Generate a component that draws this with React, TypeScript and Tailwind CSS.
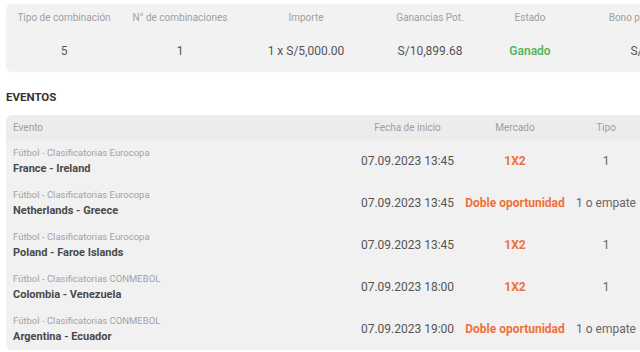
import React from 'react';

const summaryCols = [
  { label: 'Tipo de combinación', value: '5', w: 'w-[116px]' },
  { label: 'N° de combinaciones', value: '1', w: 'w-[116px]' },
  { label: 'Importe', value: '1 x S/5,000.00', w: 'w-[136px]' },
  { label: 'Ganancias Pot.', value: 'S/10,899.68', w: 'w-[112px]' },
  { label: 'Estado', value: 'Ganado', w: 'w-[88px]' },
  { label: 'Bono por combinada', value: 'S/500.00', w: 'w-[162px]' },
];

const events = [
  { league: 'Fútbol - Clasificatorias Eurocopa', match: 'France - Ireland', date: '07.09.2023 13:45', market: '1X2', pick: '1' },
  { league: 'Fútbol - Clasificatorias Eurocopa', match: 'Netherlands - Greece', date: '07.09.2023 13:45', market: 'Doble oportunidad', pick: '1 o empate' },
  { league: 'Fútbol - Clasificatorias Eurocopa', match: 'Poland - Faroe Islands', date: '07.09.2023 13:45', market: '1X2', pick: '1' },
  { league: 'Fútbol - Clasificatorias CONMEBOL', match: 'Colombia - Venezuela', date: '07.09.2023 18:00', market: '1X2', pick: '1' },
  { league: 'Fútbol - Clasificatorias CONMEBOL', match: 'Argentina - Ecuador', date: '07.09.2023 19:00', market: 'Doble oportunidad', pick: '1 o empate' },
];

export default function App() {
  return (
    <div
      className="w-[640px] h-[352px] overflow-hidden bg-white"
      style={{ fontFamily: 'Roboto, "Liberation Sans", sans-serif' }}
    >
      <div className="w-[760px] pl-[6px] pt-[4px]">
        {/* Summary */}
        <div className="flex h-[67px] flex-col rounded-[6px] bg-[#f2f2f2] shadow-[0_1px_2px_rgba(0,0,0,0.06)]">
          <div className="flex h-[27px] items-center">
            {summaryCols.map((c) => (
              <div key={c.label} className={`${c.w} shrink-0 whitespace-nowrap text-center text-[10px] text-[#9f9f9f]`}>
                {c.label}
              </div>
            ))}
          </div>
          <div className="flex h-[39px] items-center">
            {summaryCols.map((c) => (
              <div
                key={c.label}
                className={`${c.w} shrink-0 whitespace-nowrap text-center text-[12px] ${
                  c.value === 'Ganado' ? 'font-semibold text-[#55b558]' : 'text-[#555]'
                }`}
              >
                {c.value}
              </div>
            ))}
          </div>
        </div>

        {/* Eventos */}
        <div className="mt-[18px] h-[16px] text-[11.5px] font-bold leading-[16px] text-[#333]">EVENTOS</div>

        <div className="mt-[10px] w-[700px] overflow-hidden rounded-[6px] bg-[#f1f1f1]">
          <div className="flex h-[25px] items-center bg-[#ececec] text-[10px] text-[#9f9f9f]">
            <div className="w-[349px] shrink-0 pl-[7px]">Evento</div>
            <div className="w-[105px] shrink-0 text-center">Fecha de inicio</div>
            <div className="w-[110px] shrink-0 text-center">Mercado</div>
            <div className="w-[72px] shrink-0 text-center">Tipo</div>
          </div>
          {events.map((e) => (
            <div key={e.match} className="flex h-[42px] items-center">
              <div className="flex w-[349px] shrink-0 flex-col pl-[7px]">
                <span className="text-[9.5px] leading-[13px] text-[#a3a3a3]">{e.league}</span>
                <span className="mt-[2px] text-[11px] font-bold leading-[15px] text-[#4a4a4a]">{e.match}</span>
              </div>
              <div className="w-[105px] shrink-0 whitespace-nowrap text-center text-[12px] text-[#555]">{e.date}</div>
              <div className="w-[110px] shrink-0 whitespace-nowrap text-center text-[12px] font-bold text-[#f0703a]">
                {e.market}
              </div>
              <div className="w-[72px] shrink-0 whitespace-nowrap text-center text-[12px] text-[#666]">{e.pick}</div>
            </div>
          ))}
        </div>
      </div>
    </div>
  );
}
